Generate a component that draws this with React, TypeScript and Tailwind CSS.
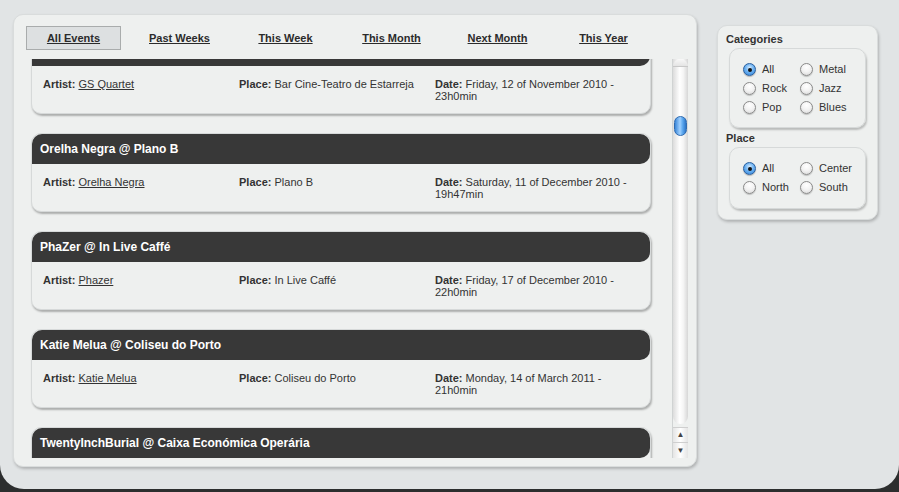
import React from 'react'

const tabs = ['All Events', 'Past Weeks', 'This Week', 'This Month', 'Next Month', 'This Year']

const events = [
    { title: 'GS Quartet @ Bar Cine-Teatro de Estarreja', artist: 'GS Quartet', place: 'Bar Cine-Teatro de Estarreja', date: 'Friday, 12 of November 2010 - 23h0min' },
    { title: 'Orelha Negra @ Plano B', artist: 'Orelha Negra', place: 'Plano B', date: 'Saturday, 11 of December 2010 - 19h47min' },
    { title: 'PhaZer @ In Live Caffé', artist: 'Phazer', place: 'In Live Caffé', date: 'Friday, 17 of December 2010 - 22h0min' },
    { title: 'Katie Melua @ Coliseu do Porto', artist: 'Katie Melua', place: 'Coliseu do Porto', date: 'Monday, 14 of March 2011 - 21h0min' },
    { title: 'TwentyInchBurial @ Caixa Económica Operária', artist: 'TwentyInchBurial', place: 'Caixa Económica Operária', date: 'Saturday, 19 of March 2011 - 22h0min' },
]

function Radio({ label, checked }: { label: string; checked?: boolean }) {
    return (
        <label className="flex items-center h-[19px] gap-[6px] text-[11px] text-[#333]">
            {checked ? (
                <span className="w-[13px] h-[13px] rounded-full border border-[#2a5f9e] bg-[radial-gradient(circle_at_50%_35%,#d6ecff_0%,#6fb3f2_45%,#2c7fd6_100%)] flex items-center justify-center shadow-[0_1px_1px_rgba(0,0,0,0.25)]">
                    <span className="w-[4px] h-[4px] rounded-full bg-[#111]" />
                </span>
            ) : (
                <span className="w-[13px] h-[13px] rounded-full border border-[#8a8a8a] bg-[radial-gradient(circle_at_50%_30%,#ffffff_0%,#f2f2f2_50%,#d4d4d4_100%)] shadow-[0_1px_1px_rgba(0,0,0,0.2)]" />
            )}
            {label}
        </label>
    )
}

function EventCard({ e }: { e: (typeof events)[number] }) {
    return (
        <div className="w-[620px] shrink-0 rounded-[10px] bg-[#eef0ef] border border-[#d6d9d9] shadow-[1px_2px_2px_rgba(0,0,0,0.28)]">
            <div className="h-[30px] rounded-[10px] rounded-bl-none rounded-br-[10px] bg-[#383838] flex items-center pl-[8px] text-white font-bold text-[12px]">
                {e.title}
            </div>
            <div className="h-[47px] flex pt-[12px] pl-[11px] text-[11px] leading-[12px] text-[#333]">
                <div className="w-[196px]">
                    <b>Artist:</b> <a href="#" className="underline">{e.artist}</a>
                </div>
                <div className="w-[196px]">
                    <b>Place:</b> {e.place}
                </div>
                <div className="w-[196px]">
                    <b>Date:</b> {e.date}
                </div>
            </div>
        </div>
    )
}

function Scrollbar() {
    return (
        <div className="w-[16px] h-full flex flex-col border-l border-[#d0d3d3]">
            <div className="flex-1 relative bg-[linear-gradient(90deg,#dcdcdc,#ffffff_45%,#f4f4f4_70%,#d6d6d6)] rounded-b-[8px]">
                <div className="h-[8px] border-b border-[#c8c8c8] rounded-t-[8px] bg-[linear-gradient(180deg,#f8f8f8,#e4e4e4)]" />
                <div className="absolute left-[1px] top-[57px] w-[13px] h-[20px] rounded-[7px] border border-[#2f6bb0] bg-[linear-gradient(90deg,#3a86d8,#9fd0ff_45%,#5aa6ee_70%,#2c74c6)]" />
            </div>
            <div className="h-[31px] mt-[3px] flex flex-col bg-[linear-gradient(90deg,#e4e4e4,#ffffff_50%,#e4e4e4)] border-t border-[#cfcfcf]">
                <div className="h-[15px] flex items-center justify-center text-[8px] text-[#444] border-b border-[#cfcfcf]">▲</div>
                <div className="h-[15px] flex items-center justify-center text-[8px] text-[#444]">▼</div>
            </div>
        </div>
    )
}

export default function App() {
    return (
        <div className="w-[899px] h-[492px] bg-[#2c2e2e] overflow-hidden" style={{ fontFamily: '"Liberation Sans", Arial, sans-serif' }}>
            <div className="h-[489px] bg-[#e1e4e5] rounded-b-[24px] flex items-start pt-[14px] pl-[13px] gap-[20px]">
                {/* main panel */}
                <div className="w-[684px] h-[453px] rounded-[10px] bg-[#eef0ef] border border-[#d9dcdc] shadow-[1px_2px_3px_rgba(0,0,0,0.22)] pt-[11px] pl-[12px] pr-[8px] pb-[8px] flex flex-col">
                    <div className="flex items-center h-[24px] gap-[11px]">
                        {tabs.map((t, i) => (
                            <a
                                key={t}
                                href="#"
                                className={
                                    'w-[95px] h-[24px] flex items-center justify-center text-[11px] font-bold underline text-[#2b2b2b] ' +
                                    (i === 0 ? 'bg-[#dde0e1] border border-[#a9acac]' : '')
                                }
                            >
                                {t}
                            </a>
                        ))}
                    </div>
                    <div className="flex-1 mt-[9px] flex overflow-hidden">
                        <div className="w-[647px] overflow-hidden pl-[5px]">
                            <div className="mt-[-24px] flex flex-col gap-[19px]">
                                {events.map((e) => (
                                    <EventCard key={e.title} e={e} />
                                ))}
                            </div>
                        </div>
                        <Scrollbar />
                    </div>
                </div>

                {/* sidebar */}
                <div className="mt-[11px] w-[161px] rounded-[10px] bg-[#eef0ef] border border-[#d9dcdc] shadow-[1px_2px_3px_rgba(0,0,0,0.22)] pt-[7px] pl-[8px] pr-[11px] pb-[10px]">
                    <div className="text-[11px] font-bold text-[#333] leading-[13px]">Categories</div>
                    <div className="ml-[3px] mt-[2px] w-[137px] h-[80px] rounded-[10px] border border-[#d6d9d9] shadow-[1px_2px_2px_rgba(0,0,0,0.22)] pt-[11px] pl-[13px] grid grid-cols-[57px_1fr] content-start">
                        <Radio label="All" checked />
                        <Radio label="Metal" />
                        <Radio label="Rock" />
                        <Radio label="Jazz" />
                        <Radio label="Pop" />
                        <Radio label="Blues" />
                    </div>
                    <div className="mt-[4px] text-[11px] font-bold text-[#333] leading-[13px]">Place</div>
                    <div className="ml-[3px] mt-[2px] w-[137px] h-[62px] rounded-[10px] border border-[#d6d9d9] shadow-[1px_2px_2px_rgba(0,0,0,0.22)] pt-[11px] pl-[13px] grid grid-cols-[57px_1fr] content-start">
                        <Radio label="All" checked />
                        <Radio label="Center" />
                        <Radio label="North" />
                        <Radio label="South" />
                    </div>
                </div>
            </div>
        </div>
    )
}
